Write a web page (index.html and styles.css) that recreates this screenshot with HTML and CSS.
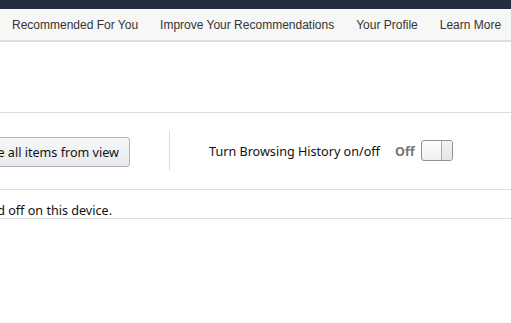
FILE: index.html
```html
<!DOCTYPE html>
<html><head>
<title>Your Browsing History</title>
<meta name="viewport" content="width=device-width, initial-scale=1">
<link rel="stylesheet" href="styles.css">
</head><body>
<div class="topbar"></div>
<div class="subnav">
  <a href="#">Recommended For You</a>
  <a href="#">Improve Your Recommendations</a>
  <a href="#">Your Profile</a>
  <a href="#">Learn More</a>
</div>
<div class="page">
  <div class="head"></div>
  <div class="controls">
    <button type="button" class="clear-btn">Remove all items from view</button>
    <div class="divider"></div>
    <span class="label">Turn Browsing History on/off</span>
    <span class="state">Off</span>
    <span class="toggle"><span class="knob"></span></span>
  </div>
  <div class="message"><span class="message-text">Browsing History is turned off on this device.</span></div>
</div>
</body></html>
```

FILE: styles.css
```css
body { margin: 0; background: #fff; font-family: "Noto Sans", "Open Sans", sans-serif; color: #111; overflow: hidden; }
.topbar { height: 9px; background: #232f3e; }
.subnav { height: 31px; background: #f7f7f7; border-bottom: 2px solid #ddd; display: flex; align-items: center; gap: 22px; padding-left: 12px; white-space: nowrap; }
.subnav a { font-family: "Liberation Sans", Arial, sans-serif; font-size: 12px; color: #333; text-decoration: none; }
.page { margin-left: -54px; width: 700px; }
.head { height: 70px; border-bottom: 1px solid #ddd; }
.controls { height: 76px; border-bottom: 1px solid #ddd; display: flex; align-items: center; font-size: 12.6px; }
.clear-btn { font-family: inherit; font-size: 12.6px; color: #111; height: 30px; padding: 0 10px; margin-top: 2px; background: linear-gradient(#f7f8fa, #e7e9ec); border: 1px solid #adb1b8; border-radius: 3px; }
.divider { width: 1px; height: 40px; background: #ddd; margin-left: 39px; }
.label { color: #111; margin-left: 39px; }
.state { font-weight: bold; color: #767676; margin-left: 15px; }
.toggle { width: 30px; height: 19px; margin-left: 6px; margin-top: -1px; border: 1px solid #8d9096; border-radius: 3px; background: linear-gradient(#fdfdfd, #eef0f3); position: relative; }
.knob { position: absolute; right: 0; top: 0; bottom: 0; width: 10px; border-left: 1px solid #aaa; background: linear-gradient(#f3f3f3, #e6e6e6); border-radius: 0 2px 2px 0; }
.message { height: 29px; border-bottom: 1px solid #ddd; font-size: 12.6px; line-height: 17px; padding-top: 12px; box-sizing: border-box; white-space: nowrap; }
.message-text { display: inline-block; margin-left: -98px; }
```
